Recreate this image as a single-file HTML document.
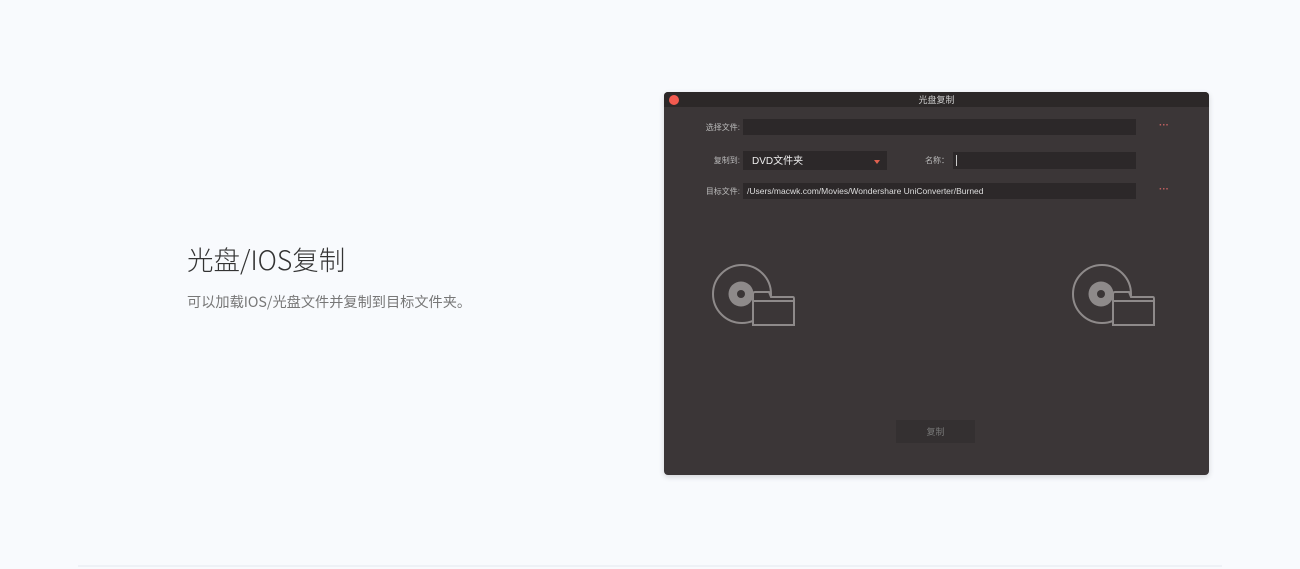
<!DOCTYPE html>
<html><head><meta charset="utf-8"><style>
*{margin:0;padding:0;box-sizing:border-box}
body{width:1300px;height:569px;background:#f8fafd;position:relative;overflow:hidden;font-family:"Liberation Sans","Noto Sans CJK SC",sans-serif}
.a{position:absolute}
h1{position:absolute;left:187px;top:241px;font-size:26.5px;font-weight:300;color:#333;line-height:36px;font-family:"Noto Sans CJK SC","Liberation Sans",sans-serif}
.sub{left:187px;top:291px;font-size:14.2px;color:#777;font-family:"Noto Sans CJK SC",sans-serif;line-height:22px}
.win{left:664px;top:92px;width:545px;height:383px;background:#3b3637;border-radius:4px;overflow:hidden;box-shadow:0 2px 6px rgba(0,0,0,.15)}
.tb{left:0;top:0;width:100%;height:15px;background:#2c2828;color:#ccc;font-size:9px;text-align:center;line-height:16px}
.lbl{font-size:8px;color:#bbb;text-align:right;width:60px;line-height:18px}
.in{background:#2c2829;color:#ddd;font-size:8.5px;line-height:17px;padding-left:4px}
.dots{color:#c06060;font-size:10px;font-weight:bold}
</style></head><body>
<h1>光盘/IOS复制</h1>
<div class="a sub">可以加载IOS/光盘文件并复制到目标文件夹。</div>
<div class="a" style="left:78px;top:565px;width:1144px;height:2px;background:#eef1f6"></div>
<div class="a win">
 <div class="a tb">光盘复制</div>
 <div class="a" style="left:5px;top:3px;width:10px;height:10px;border-radius:50%;background:#f25a4f"></div>
 <div class="a lbl" style="left:16px;top:27px">选择文件:</div>
 <div class="a in" style="left:79px;top:27px;width:393px;height:16px"></div>
 <div class="a dots" style="left:495px;top:28px">···</div>
 <div class="a lbl" style="left:16px;top:60px">复制到:</div>
 <div class="a in" style="left:79px;top:59px;width:144px;height:19px;font-size:10px;color:#eee;line-height:21px;padding-left:9px">DVD文件夹</div>
 <div class="a" style="left:210px;top:68px;width:0;height:0;border-left:3px solid transparent;border-right:3px solid transparent;border-top:4px solid #e0604f"></div>
 <div class="a lbl" style="left:225px;top:60px">名称：</div>
 <div class="a in" style="left:289px;top:60px;width:183px;height:17px"></div>
 <div class="a" style="left:292px;top:63px;width:1px;height:11px;background:#ccc"></div>
 <div class="a lbl" style="left:16px;top:91px">目标文件:</div>
 <div class="a in" style="left:79px;top:91px;width:393px;height:16px">/Users/macwk.com/Movies/Wondershare UniConverter/Burned</div>
 <div class="a dots" style="left:495px;top:92px">···</div>
 <svg class="a" style="left:0;top:0" width="545" height="383">
  <g id="ic" fill="none" stroke="#8e8a8a" stroke-width="2">
   <circle cx="78" cy="202" r="29"/>
   <circle cx="77" cy="202" r="12.5" fill="#8e8a8a" stroke="none"/>
   <circle cx="77" cy="202" r="4" fill="#3b3637" stroke="none"/>
   <path d="M89 233 V202 Q89 200 91 200 H105 L107 205 H129 Q130 205 130 207 V233 Z" fill="#3b3637"/>
   <path d="M89 209 H130"/>
  </g>
  <use href="#ic" x="360" y="0"/>
 </svg>
 <div class="a" style="left:232px;top:328px;width:79px;height:23px;background:#343031;color:#777;font-size:9px;text-align:center;line-height:25px">复制</div>
</div>
</body></html>
